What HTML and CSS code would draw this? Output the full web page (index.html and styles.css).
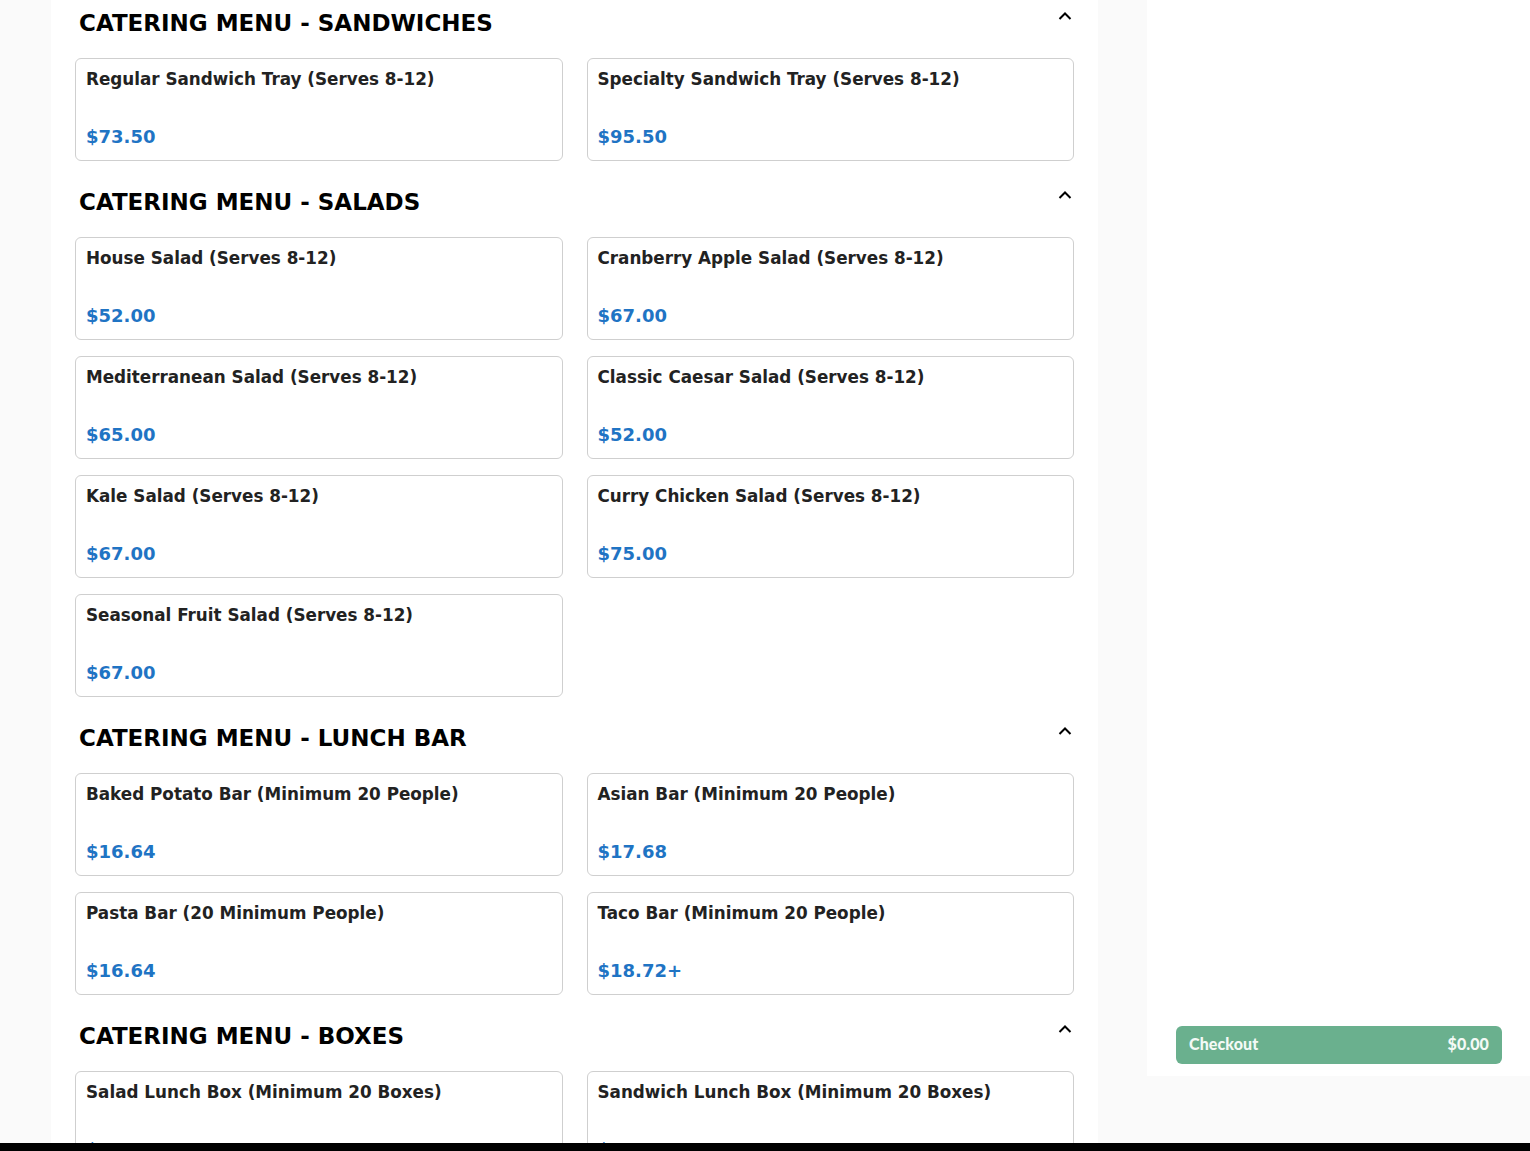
FILE: index.html
```html
<!DOCTYPE html>
<html lang="en">
<head>
<meta charset="utf-8">
<title>Catering Menu</title>
<link rel="stylesheet" href="styles.css">
</head>
<body>
<div class="layout">
  <main class="menu">
    <section class="section">
      <div class="section-head">
        <h2>CATERING MENU - SANDWICHES</h2>
        <svg class="chev" viewBox="0 0 14 8" width="14" height="8"><path d="M1.5 7 L7 1.5 L12.5 7" fill="none" stroke="#000" stroke-width="2"/></svg>
      </div>
      <div class="grid">
        <div class="card"><div class="name">Regular Sandwich Tray (Serves 8-12)</div><div class="price">$73.50</div></div>
        <div class="card"><div class="name">Specialty Sandwich Tray (Serves 8-12)</div><div class="price">$95.50</div></div>
      </div>
    </section>
    <section class="section">
      <div class="section-head">
        <h2>CATERING MENU - SALADS</h2>
        <svg class="chev" viewBox="0 0 14 8" width="14" height="8"><path d="M1.5 7 L7 1.5 L12.5 7" fill="none" stroke="#000" stroke-width="2"/></svg>
      </div>
      <div class="grid">
        <div class="card"><div class="name">House Salad (Serves 8-12)</div><div class="price">$52.00</div></div>
        <div class="card"><div class="name">Cranberry Apple Salad (Serves 8-12)</div><div class="price">$67.00</div></div>
        <div class="card"><div class="name">Mediterranean Salad (Serves 8-12)</div><div class="price">$65.00</div></div>
        <div class="card"><div class="name">Classic Caesar Salad (Serves 8-12)</div><div class="price">$52.00</div></div>
        <div class="card"><div class="name">Kale Salad (Serves 8-12)</div><div class="price">$67.00</div></div>
        <div class="card"><div class="name">Curry Chicken Salad (Serves 8-12)</div><div class="price">$75.00</div></div>
        <div class="card"><div class="name">Seasonal Fruit Salad (Serves 8-12)</div><div class="price">$67.00</div></div>
      </div>
    </section>
    <section class="section">
      <div class="section-head">
        <h2>CATERING MENU - LUNCH BAR</h2>
        <svg class="chev" viewBox="0 0 14 8" width="14" height="8"><path d="M1.5 7 L7 1.5 L12.5 7" fill="none" stroke="#000" stroke-width="2"/></svg>
      </div>
      <div class="grid">
        <div class="card"><div class="name">Baked Potato Bar (Minimum 20 People)</div><div class="price">$16.64</div></div>
        <div class="card"><div class="name">Asian Bar (Minimum 20 People)</div><div class="price">$17.68</div></div>
        <div class="card"><div class="name">Pasta Bar (20 Minimum People)</div><div class="price">$16.64</div></div>
        <div class="card"><div class="name">Taco Bar (Minimum 20 People)</div><div class="price">$18.72+</div></div>
      </div>
    </section>
    <section class="section">
      <div class="section-head">
        <h2>CATERING MENU - BOXES</h2>
        <svg class="chev" viewBox="0 0 14 8" width="14" height="8"><path d="M1.5 7 L7 1.5 L12.5 7" fill="none" stroke="#000" stroke-width="2"/></svg>
      </div>
      <div class="grid">
        <div class="card"><div class="name">Salad Lunch Box (Minimum 20 Boxes)</div><div class="price">$16.00</div></div>
        <div class="card"><div class="name">Sandwich Lunch Box (Minimum 20 Boxes)</div><div class="price">$16.00</div></div>
      </div>
    </section>
  </main>
  <aside class="cart">
    <button class="checkout"><span>Checkout</span><span>$0.00</span></button>
  </aside>
</div>
<div class="bottom-bar"></div>
</body>
</html>
```
FILE: styles.css
```css
html, body {
  margin: 0;
  padding: 0;
  height: 1151px;
  overflow: hidden;
  background: #fafafa;
  font-family: "DejaVu Sans", sans-serif;
}

.layout {
  display: flex;
  align-items: flex-start;
  padding-left: 51px;
  gap: 49px;
}

.menu {
  width: 1047px;
  background: #fff;
  padding: 10px 24px 40px 24px;
  box-sizing: border-box;
}

.section + .section {
  margin-top: 28px;
}

.section-head {
  display: flex;
  justify-content: space-between;
  align-items: flex-start;
  padding: 0 2px 0 4px;
  margin-bottom: 22px;
}

.section-head h2 {
  margin: 0;
  font-size: 23px;
  line-height: 26px;
  font-weight: bold;
  color: #000;
}

.chev {
  display: block;
  margin-top: 2px;
}

.grid {
  display: grid;
  grid-template-columns: 1fr 1fr;
  column-gap: 24px;
  row-gap: 16px;
}

.card {
  border: 1px solid #cfcfcf;
  border-radius: 6px;
  min-height: 103px;
  box-sizing: border-box;
  padding: 10px 10px 13px 10px;
  display: flex;
  flex-direction: column;
  justify-content: space-between;
}

.name {
  font-size: 16.8px;
  line-height: 20px;
  font-weight: bold;
  color: #222;
}

.price {
  font-size: 18px;
  line-height: 20px;
  font-weight: bold;
  color: #1f74c4;
}

.cart {
  width: 383px;
  height: 1076px;
  background: #fff;
  box-sizing: border-box;
  padding: 0 28px 12px 29px;
  display: flex;
  flex-direction: column;
  justify-content: flex-end;
}

.checkout {
  display: flex;
  justify-content: space-between;
  align-items: center;
  height: 38px;
  width: 100%;
  border: none;
  border-radius: 6px;
  background: #6ab08e;
  color: #f4faf6;
  font-family: "Lato", sans-serif;
  font-weight: 900;
  font-size: 16px;
  letter-spacing: 0.1px;
  padding: 0 13px 3px 13px;
}

.bottom-bar {
  position: fixed;
  left: 0;
  right: 0;
  bottom: 0;
  height: 8px;
  background: #000;
}
```
